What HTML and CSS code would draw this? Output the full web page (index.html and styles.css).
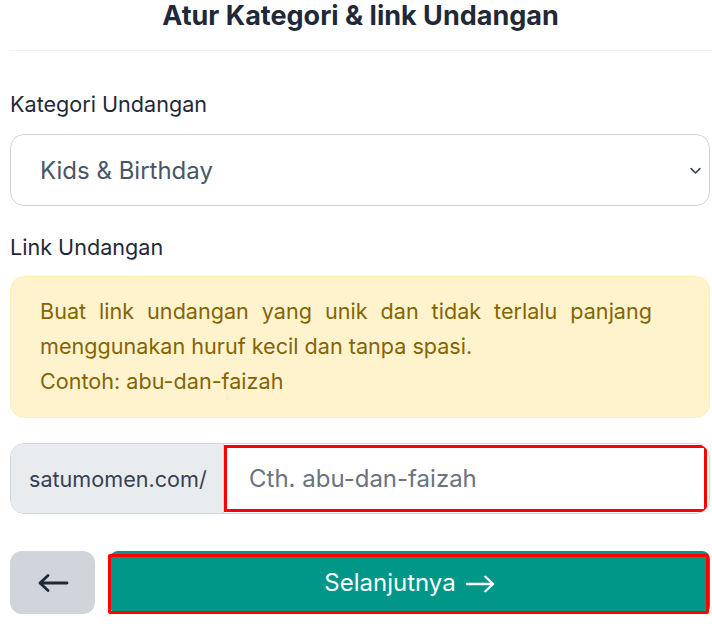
FILE: index.html
```html
<!DOCTYPE html>
<html lang="id">
<head>
<meta charset="utf-8">
<title>Atur Kategori &amp; link Undangan</title>
<link rel="stylesheet" href="styles.css">
</head>
<body>
<div class="page">
  <header class="header">
    <h1 class="title">Atur Kategori &amp; link Undangan</h1>
  </header>

  <label class="label label-first" for="kategori">Kategori Undangan</label>
  <div class="select" id="kategori">
    <span class="select-value">Kids &amp; Birthday</span>
    <svg class="chevron" viewBox="0 0 24 24" width="15" height="15" aria-hidden="true">
      <polyline points="5,9 12,16 19,9" fill="none" stroke="#374151" stroke-width="2.6" stroke-linecap="round" stroke-linejoin="round"/>
    </svg>
  </div>

  <label class="label label-second" for="link">Link Undangan</label>
  <div class="alert">
    Buat link undangan yang unik dan tidak terlalu panjang menggunakan huruf kecil dan tanpa spasi.<br>
    Contoh: abu-dan-faizah
  </div>

  <div class="input-group">
    <span class="prefix">satumomen.com/</span>
    <input id="link" class="input" type="text" placeholder="Cth. abu-dan-faizah">
  </div>

  <div class="actions">
    <button class="btn-back" type="button" aria-label="Kembali">
      <svg viewBox="0 0 32 20" width="32" height="20" aria-hidden="true">
        <path d="M30 10 H3 M11 2.5 L3 10 L11 17.5" fill="none" stroke="#1f2937" stroke-width="2.8" stroke-linecap="round" stroke-linejoin="round"/>
      </svg>
    </button>
    <button class="btn-next" type="button">
      <span>Selanjutnya</span>
      <svg viewBox="0 0 32 20" width="31" height="20" aria-hidden="true">
        <path d="M2 10 H29 M21 2.5 L29 10 L21 17.5" fill="none" stroke="#ffffff" stroke-width="2.4" stroke-linecap="round" stroke-linejoin="round"/>
      </svg>
    </button>
  </div>
</div>
</body>
</html>
```

FILE: styles.css
```css
* { box-sizing: border-box; }

body {
  margin: 0;
  background: #ffffff;
  font-family: Inter, "Noto Sans", sans-serif;
  color: #1f2937;
}

.page {
  width: 712px;
  padding: 0 2px 0 10px;
}

.header {
  margin-left: -1px;
  margin-right: -2px;
  height: 51px;
  border-bottom: 1px solid #f1f2f4;
}

.title {
  margin: 0;
  font-size: 27px;
  line-height: 32px;
  font-weight: 700;
  text-align: center;
  color: #1f2937;
  letter-spacing: 0;
}

.label {
  display: block;
  font-size: 21.6px;
  line-height: 28px;
  color: #1f2937;
}

.label-first { margin-top: 39px; margin-bottom: 16px; }
.label-second { margin-top: 27px; margin-bottom: 15px; }

.select {
  height: 72px;
  border: 1px solid #d1d5db;
  border-radius: 14px;
  display: flex;
  align-items: center;
  justify-content: space-between;
  padding: 0 6px 0 29px;
}

.select-value {
  font-size: 24px;
  color: #4b5563;
}

.chevron { display: block; }

.alert {
  background: #fff3cd;
  border: 1px solid #ffeeba;
  border-radius: 14px;
  padding: 17px 57px 18px 29px;
  font-size: 21.6px;
  line-height: 35px;
  color: #856404;
  text-align: justify;
}

.input-group {
  margin-top: 25px;
  height: 71px;
  display: flex;
  border: 1px solid #d1d5db;
  border-radius: 14px;
  overflow: hidden;
}

.prefix {
  width: 213px;
  flex: none;
  background: #e9ecef;
  border-right: 1px solid #d1d5db;
  display: flex;
  align-items: center;
  padding-left: 18px;
  font-size: 21.6px;
  color: #374151;
}

.input {
  flex: 1;
  min-width: 0;
  border: 0;
  margin: 1px 2px 1px 0;
  outline: 3px solid #ff0000;
  outline-offset: -3px;
  padding: 0 0 0 25px;
  font-family: inherit;
  font-size: 24px;
  color: #374151;
  background: #ffffff;
}

.input::placeholder { color: #6b7280; }

.actions {
  margin-top: 37px;
  display: flex;
  gap: 15px;
}

.btn-back {
  width: 85px;
  height: 63px;
  flex: none;
  border: 0;
  border-radius: 12px;
  background: #d1d5db;
  display: flex;
  align-items: center;
  justify-content: center;
  padding: 0;
}

.btn-next {
  position: relative;
  flex: 1;
  height: 63px;
  border: 0;
  border-radius: 8px;
  background: #009688;
  color: #ffffff;
  font-family: inherit;
  font-size: 24px;
  display: flex;
  align-items: center;
  justify-content: center;
  gap: 9px;
  padding: 0;
}

.btn-next svg { display: block; margin-top: 2px; }

.btn-next::after {
  content: "";
  position: absolute;
  top: 3px;
  left: -2px;
  right: 1px;
  bottom: 0;
  border: 3px solid #ff0000;
  border-radius: 2px;
}
```
